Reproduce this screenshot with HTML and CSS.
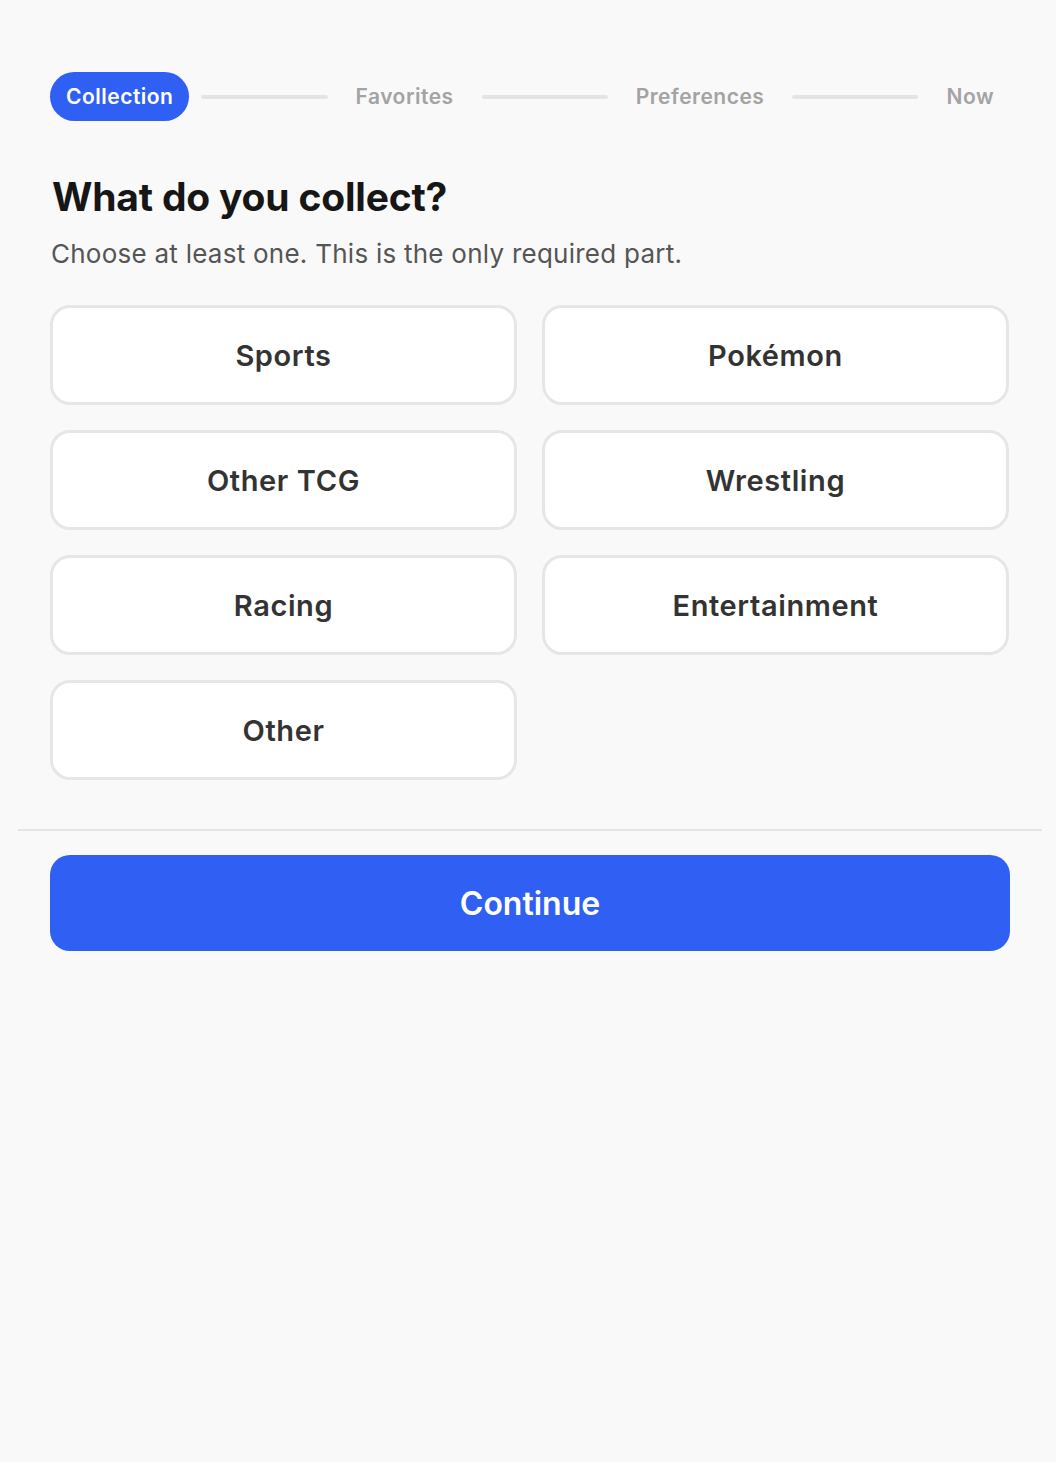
FILE: index.html
```html
<!DOCTYPE html>
<html lang="en">
<head>
<meta charset="utf-8">
<title>What do you collect?</title>
<link rel="stylesheet" href="styles.css">
</head>
<body>
<main class="page">
  <nav class="stepper">
    <span class="step step-active">Collection</span>
    <span class="step-line"></span>
    <span class="step">Favorites</span>
    <span class="step-line"></span>
    <span class="step">Preferences</span>
    <span class="step-line"></span>
    <span class="step">Now</span>
  </nav>

  <h1 class="title">What do you collect?</h1>
  <p class="subtitle">Choose at least one. This is the only required part.</p>

  <div class="options">
    <button class="option">Sports</button>
    <button class="option">Pokémon</button>
    <button class="option">Other TCG</button>
    <button class="option">Wrestling</button>
    <button class="option">Racing</button>
    <button class="option">Entertainment</button>
    <button class="option">Other</button>
  </div>

  <div class="footer">
    <hr class="divider">
    <button class="continue">Continue</button>
  </div>
</main>
</body>
</html>
```

FILE: styles.css
```css
* { box-sizing: border-box; }

html, body {
  margin: 0;
  background: #f9f9f9;
}

body {
  font-family: Inter, "Noto Sans", sans-serif;
  color: #1a1a1a;
  min-height: 1462px;
}

.page {
  padding: 72px 46px 0 50px;
}

.stepper {
  display: flex;
  align-items: center;
  gap: 12px;
  width: 960px;
}

.step {
  height: 49px;
  display: flex;
  align-items: center;
  padding: 0 16px;
  border-radius: 25px;
  font-size: 21px;
  font-weight: 600;
  color: #a3a3a3;
  letter-spacing: 0.5px;
  white-space: nowrap;
}

.step-active {
  background: #2f5ff3;
  color: #fff;
}

.step-line {
  flex: 1;
  height: 4px;
  border-radius: 2px;
  background: #e4e4e4;
}

.title {
  margin: 53px 0 0 2px;
  font-size: 39px;
  line-height: 46px;
  font-weight: 700;
  letter-spacing: -0.2px;
  color: #161616;
}

.subtitle {
  margin: 18px 0 0 1px;
  font-size: 26px;
  line-height: 32px;
  font-weight: 400;
  letter-spacing: 0.25px;
  color: #555;
}

.options {
  margin-top: 35px;
  display: grid;
  grid-template-columns: 467px 467px;
  column-gap: 25px;
  row-gap: 25px;
}

.option {
  height: 100px;
  background: #fff;
  border: 3px solid #e6e6e6;
  border-radius: 20px;
  font-family: inherit;
  font-size: 29px;
  font-weight: 600;
  letter-spacing: 0.6px;
  color: #333;
  cursor: pointer;
}

.footer {
  margin-top: 49px;
  width: 960px;
}

.divider {
  margin: 0 -32px;
  border: 0;
  height: 2px;
  background: #e4e4e4;
}

.continue {
  margin-top: 24px;
  width: 960px;
  height: 96px;
  border: 0;
  border-radius: 20px;
  background: #2f5ff3;
  color: #fff;
  font-family: inherit;
  font-size: 32px;
  font-weight: 600;
  letter-spacing: 0;
  cursor: pointer;
}
```
